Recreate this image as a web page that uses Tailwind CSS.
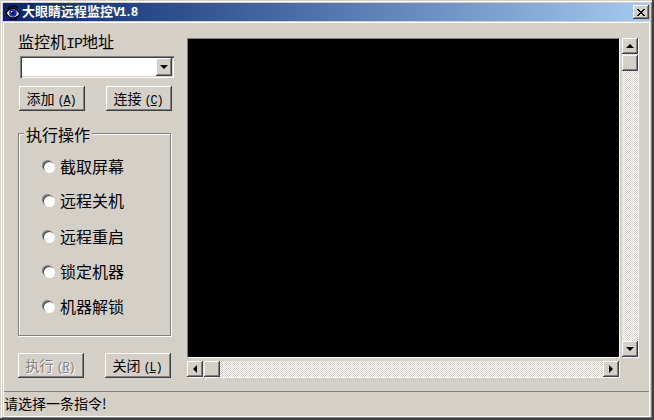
<!DOCTYPE html>
<html lang="zh-CN">
<head>
    <meta charset="UTF-8">
    <title>大眼睛远程监控V1.8</title>
    <script src="https://cdn.jsdelivr.net/npm/@tailwindcss/browser@4"></script>
</head>
<body class="bg-[#d4d0c8]">
    <div class="w-[654px] h-[420px] flex flex-col pt-[3px] pl-[3px] pr-[4px] pb-[3px] bg-[#d4d0c8] text-black font-['Noto_Sans_CJK_SC',sans-serif] overflow-hidden shadow-[inset_-2px_-2px_0_#404040,inset_1px_1px_0_#d4d0c8,inset_2px_2px_0_#fff,inset_-3px_-3px_0_#808080]">

        <!-- barra de titulo -->
        <div class="h-[18px] flex items-center shrink-0 bg-gradient-to-r from-[#0a246a] to-[#a6caf0]">
            <svg class="w-4 h-4 ml-[2px]" viewBox="0 0 16 16">
                <path d="M1 9 Q4 4.500 8 4.500 Q12 4.500 15 10 Q12 14 8 14 Q4 14 1 9Z" fill="#e8e8e8" stroke="#000" stroke-width="1.300"/>
                <circle cx="8" cy="9" r="3.800" fill="#1c2fc0"/>
                <circle cx="8" cy="9" r="1.500" fill="#000a50"/>
                <rect x="6" y="7" width="1.300" height="1.300" fill="#fff"/>
                <path d="M2 5 Q7 0.500 13 3.500" fill="none" stroke="#000" stroke-width="1.600"/>
                <path d="M4 15 Q8 16 12 15" fill="none" stroke="#000" stroke-width="1.200"/>
            </svg>
            <span class="ml-[1px] text-[13px] leading-[18px] font-bold text-white whitespace-nowrap">大眼睛远程监控<span class="font-['Liberation_Mono'] text-[12.5px] tracking-[-1.600px]">V1.8</span></span>
            <div class="ml-auto mr-[1px] w-4 h-[14px] flex items-center justify-center bg-[#d4d0c8] shadow-[inset_-1px_-1px_0_#404040,inset_1px_1px_0_#fff,inset_-2px_-2px_0_#808080]">
                <svg class="w-2 h-[7px]" viewBox="0 0 8 7"><path d="M0 0h2v1h1v1h2V1h1V0h2v1H7v1H6v1H5v1h1v1h1v1h1v1H6V6H5V5H3v1H2v1H0V6h1V5h1V4h1V3H2V2H1V1H0z" fill="#000"/></svg>
            </div>
        </div>

        <!-- area principal -->
        <div class="flex-1 flex flex-col mt-[1px] border border-white min-h-0">
            <div class="flex-1 flex min-h-0">

                <!-- coluna esquerda -->
                <div class="w-[183px] shrink-0 pl-[14px]">
                    <div class="h-5 mt-[8px] text-[16px] leading-5 whitespace-nowrap">监控机<span class="font-['Liberation_Mono'] text-[15px] tracking-[-1px]">IP</span>地址</div>
                    <div class="w-[154px] h-[22px] mt-[5px] ml-[2px] flex justify-end items-center pr-[2px] bg-white shadow-[inset_1px_1px_0_#808080,inset_2px_2px_0_#404040,inset_-1px_-1px_0_#fff,inset_-2px_-2px_0_#d4d0c8]">
                        <div class="w-4 h-[18px] flex items-center justify-center bg-[#d4d0c8] shadow-[inset_-1px_-1px_0_#404040,inset_1px_1px_0_#fff,inset_-2px_-2px_0_#808080]">
                            <div class="w-0 h-0 border-x-[4px] border-x-transparent border-t-[4px] border-t-black"></div>
                        </div>
                    </div>
                    <div class="flex mt-[8px] ml-[1px] gap-[21px]">
                        <button class="w-[66px] h-[25px] pr-[2px] text-[14px] leading-[25px] whitespace-nowrap bg-[#d4d0c8] shadow-[inset_-1px_-1px_0_#404040,inset_1px_1px_0_#fff,inset_-2px_-2px_0_#808080]">添加 <span class="font-['Liberation_Mono'] text-[12px] tracking-[-1.200px]">(<u>A</u>)</span></button>
                        <button class="w-[66px] h-[25px] pr-[2px] text-[14px] leading-[25px] whitespace-nowrap bg-[#d4d0c8] shadow-[inset_-1px_-1px_0_#404040,inset_1px_1px_0_#fff,inset_-2px_-2px_0_#808080]">连接 <span class="font-['Liberation_Mono'] text-[12px] tracking-[-1.200px]">(<u>C</u>)</span></button>
                    </div>

                    <!-- grupo de operacoes -->
                    <div class="w-[153px] h-[203px] mt-[22px] border border-[#808080] shadow-[1px_1px_0_#fff,inset_1px_1px_0_#fff]">
                        <div class="w-fit h-5 -mt-[10px] ml-[5px] px-[2px] bg-[#d4d0c8] text-[16px] leading-5">执行操作</div>
                        <div class="mt-[12px] pl-[24px] text-[16px] leading-5">
                            <div class="h-[34px] flex items-start"><i class="w-[11px] h-[11px] mt-[5px] mr-[6px] rounded-full bg-white shadow-[inset_1px_1px_0_#404040,-1px_-1px_0_#808080,1px_1px_0_#fff]"></i>截取屏幕</div>
                            <div class="h-[36px] flex items-start"><i class="w-[11px] h-[11px] mt-[5px] mr-[6px] rounded-full bg-white shadow-[inset_1px_1px_0_#404040,-1px_-1px_0_#808080,1px_1px_0_#fff]"></i>远程关机</div>
                            <div class="h-[35px] flex items-start"><i class="w-[11px] h-[11px] mt-[5px] mr-[6px] rounded-full bg-white shadow-[inset_1px_1px_0_#404040,-1px_-1px_0_#808080,1px_1px_0_#fff]"></i>远程重启</div>
                            <div class="h-[35px] flex items-start"><i class="w-[11px] h-[11px] mt-[5px] mr-[6px] rounded-full bg-white shadow-[inset_1px_1px_0_#404040,-1px_-1px_0_#808080,1px_1px_0_#fff]"></i>锁定机器</div>
                            <div class="h-[35px] flex items-start"><i class="w-[11px] h-[11px] mt-[5px] mr-[6px] rounded-full bg-white shadow-[inset_1px_1px_0_#404040,-1px_-1px_0_#808080,1px_1px_0_#fff]"></i>机器解锁</div>
                        </div>
                    </div>

                    <div class="flex mt-[17px] gap-[21px]">
                        <button class="w-[66px] h-[25px] pr-[2px] text-[14px] leading-[25px] whitespace-nowrap bg-[#d4d0c8] text-[#808080] [text-shadow:1px_1px_0_#fff] shadow-[inset_-1px_-1px_0_#404040,inset_1px_1px_0_#fff,inset_-2px_-2px_0_#808080]">执行 <span class="font-['Liberation_Mono'] text-[12px] tracking-[-1.200px]">(<u>R</u>)</span></button>
                        <button class="w-[66px] h-[25px] pr-[2px] text-[14px] leading-[25px] whitespace-nowrap bg-[#d4d0c8] shadow-[inset_-1px_-1px_0_#404040,inset_1px_1px_0_#fff,inset_-2px_-2px_0_#808080]">关闭 <span class="font-['Liberation_Mono'] text-[12px] tracking-[-1.200px]">(<u>L</u>)</span></button>
                    </div>
                </div>

                <!-- visor e barras de rolagem -->
                <div class="pt-[15px]">
                    <div class="flex gap-[2px]">
                        <div class="w-[433px] h-[320px] bg-black border border-t-[#808080] border-l-[#808080] border-r-white border-b-white"></div>
                        <div class="w-4 h-[319px] flex flex-col bg-[repeating-conic-gradient(#fff_0_25%,#d4d0c8_0_50%)] bg-[length:2px_2px] shadow-[1px_1px_0_#fff]">
                            <div class="w-4 h-4 flex items-center justify-center bg-[#d4d0c8] shadow-[inset_-1px_-1px_0_#404040,inset_1px_1px_0_#fff,inset_-2px_-2px_0_#808080]">
                                <div class="w-0 h-0 border-x-[4px] border-x-transparent border-b-[4px] border-b-black"></div>
                            </div>
                            <div class="w-4 h-4 mt-[1px] bg-[#d4d0c8] shadow-[inset_-1px_-1px_0_#404040,inset_1px_1px_0_#fff,inset_-2px_-2px_0_#808080]"></div>
                            <div class="w-4 h-4 mt-auto flex items-center justify-center bg-[#d4d0c8] shadow-[inset_-1px_-1px_0_#404040,inset_1px_1px_0_#fff,inset_-2px_-2px_0_#808080]">
                                <div class="w-0 h-0 border-x-[4px] border-x-transparent border-t-[4px] border-t-black"></div>
                            </div>
                        </div>
                    </div>
                    <div class="w-[432px] h-4 mt-[3px] flex bg-[repeating-conic-gradient(#fff_0_25%,#d4d0c8_0_50%)] bg-[length:2px_2px] shadow-[1px_1px_0_#fff]">
                        <div class="w-4 h-4 flex items-center justify-center bg-[#d4d0c8] shadow-[inset_-1px_-1px_0_#404040,inset_1px_1px_0_#fff,inset_-2px_-2px_0_#808080]">
                            <div class="w-0 h-0 border-y-[4px] border-y-transparent border-r-[4px] border-r-black"></div>
                        </div>
                        <div class="w-4 h-4 ml-[1px] bg-[#d4d0c8] shadow-[inset_-1px_-1px_0_#404040,inset_1px_1px_0_#fff,inset_-2px_-2px_0_#808080]"></div>
                        <div class="w-4 h-4 ml-auto flex items-center justify-center bg-[#d4d0c8] shadow-[inset_-1px_-1px_0_#404040,inset_1px_1px_0_#fff,inset_-2px_-2px_0_#808080]">
                            <div class="w-0 h-0 border-y-[4px] border-y-transparent border-l-[4px] border-l-black"></div>
                        </div>
                    </div>
                </div>
            </div>

            <!-- barra de status -->
            <div class="h-[25px] shrink-0 border-t border-[#808080] text-[14px] leading-[23px]">请选择一条指令!</div>
        </div>
    </div>
</body>
</html>
